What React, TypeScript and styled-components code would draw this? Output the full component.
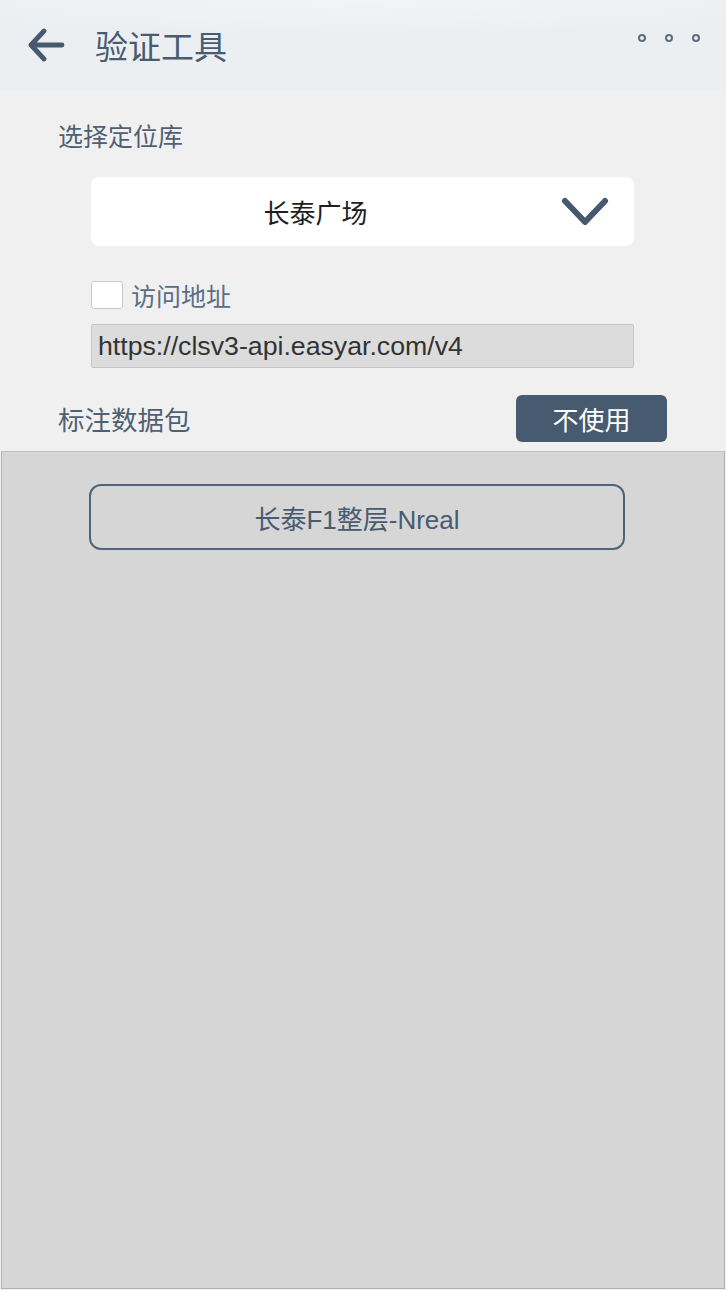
import React from 'react';
import styled, { createGlobalStyle } from 'styled-components';

const GlobalStyle = createGlobalStyle`
  html, body {
    margin: 0;
    padding: 0;
    background: #f0f0f0;
  }
  body {
    font-family: 'Liberation Sans', 'Noto Sans CJK SC', sans-serif;
  }
  * {
    box-sizing: border-box;
  }
`;

const Page = styled.div`
  width: 726px;
  height: 1290px;
  display: flex;
  flex-direction: column;
  background: #f0f0f0;
  overflow: hidden;
`;

const Header = styled.header`
  height: 90px;
  flex-shrink: 0;
  display: flex;
  align-items: center;
  padding: 0 26px 0 27px;
  background: radial-gradient(ellipse 70% 40% at 50% 0%, #f1f4f6 0%, #ebeff2 100%);
`;

const BackButton = styled.button`
  border: none;
  background: none;
  padding: 0;
  width: 38px;
  height: 34px;
  display: flex;
  align-items: center;
  justify-content: center;
`;

const Title = styled.h1`
  margin: 0 0 0 30px;
  font-family: 'Noto Sans CJK SC', sans-serif;
  font-weight: 400;
  font-size: 33px;
  line-height: 40px;
  color: #485b70;
  flex: 1;
`;

const MoreDots = styled.div`
  display: flex;
  gap: 19px;
  align-self: flex-start;
  margin-top: 34px;
`;

const Dot = styled.span`
  width: 8px;
  height: 8px;
  border-radius: 50%;
  border: 2px solid #5f6e7e;
`;

const Section = styled.section`
  display: flex;
  flex-direction: column;
  padding: 0 58px;
`;

const Label = styled.div<{ $size?: number }>`
  font-family: 'Noto Sans CJK SC', sans-serif;
  font-size: ${p => p.$size ?? 25}px;
  line-height: 30px;
  color: #4f6073;
`;

const Indented = styled.div`
  margin-left: 33px;
  width: 543px;
`;

const Select = styled(Indented)`
  margin-top: 27px;
  height: 69px;
  background: #ffffff;
  border-radius: 8px;
  display: grid;
  grid-template-columns: 1fr 94px;
  align-items: center;
`;

const SelectValue = styled.div`
  text-align: center;
  font-family: 'Noto Sans CJK SC', sans-serif;
  font-size: 26px;
  color: #1e1e1e;
`;

const Chevron = styled.div`
  display: flex;
  align-items: center;
  justify-content: flex-start;
  padding-left: 20px;
`;

const CheckRow = styled(Indented)`
  margin-top: 33px;
  height: 32px;
  display: flex;
  align-items: center;
  gap: 8px;
`;

const Checkbox = styled.span`
  width: 32px;
  height: 28px;
  background: #ffffff;
  border: 1px solid #c9c9c9;
  border-radius: 3px;
`;

const CheckLabel = styled.span`
  font-family: 'Noto Sans CJK SC', sans-serif;
  font-size: 25px;
  color: #5b6e84;
`;

const UrlField = styled(Indented)`
  margin-top: 13px;
  height: 44px;
  background: #dcdcdc;
  border: 1px solid #c6c6c6;
  border-radius: 2px;
  display: flex;
  align-items: center;
  padding-left: 6px;
  font-family: 'Liberation Sans', sans-serif;
  font-size: 26.7px;
  color: #333333;
  white-space: nowrap;
`;

const DataRow = styled.div`
  margin-top: 27px;
  display: flex;
  align-items: center;
  justify-content: space-between;
  padding-right: 1px;
`;

const DarkButton = styled.button`
  width: 151px;
  height: 47px;
  border: none;
  border-radius: 6px;
  background: #465a70;
  color: #ffffff;
  font-family: 'Noto Sans CJK SC', sans-serif;
  font-size: 26px;
  padding: 0;
`;

const Panel = styled.div`
  flex: 1;
  margin: 9px 1px 1px 1px;
  background: #d6d6d6;
  border: 1px solid #b0b0b0;
  border-top-color: #c0c0c0;
  padding: 32px 0 0 87px;
`;

const PackageItem = styled.button`
  width: 536px;
  height: 66px;
  border: 2px solid #506479;
  border-radius: 12px;
  background: transparent;
  color: #485b70;
  font-family: 'Liberation Sans', 'Noto Sans CJK SC', sans-serif;
  font-size: 26px;
  padding: 0;
  display: flex;
  align-items: center;
  justify-content: center;
`;

const ArrowLeft = () => (
  <svg width="38" height="34" viewBox="0 0 38 34">
    <path
      d="M35 17 H4 M17 3 L4 17 L17 31"
      fill="none"
      stroke="#46596e"
      strokeWidth="4.8"
      strokeLinecap="round"
      strokeLinejoin="round"
    />
  </svg>
);

const ChevronDown = () => (
  <svg width="50" height="32" viewBox="0 0 50 32">
    <path
      d="M5 5 L25 26 L45 5"
      fill="none"
      stroke="#46596e"
      strokeWidth="6"
      strokeLinecap="round"
      strokeLinejoin="round"
    />
  </svg>
);

const App: React.FC = () => (
  <>
    <GlobalStyle />
    <Page>
      <Header>
        <BackButton>
          <ArrowLeft />
        </BackButton>
        <Title>验证工具</Title>
        <MoreDots>
          <Dot />
          <Dot />
          <Dot />
        </MoreDots>
      </Header>
      <Section>
        <Label style={{ marginTop: 30 }}>选择定位库</Label>
        <Select>
          <SelectValue>长泰广场</SelectValue>
          <Chevron>
            <ChevronDown />
          </Chevron>
        </Select>
        <CheckRow>
          <Checkbox />
          <CheckLabel>访问地址</CheckLabel>
        </CheckRow>
        <UrlField>https://clsv3-api.easyar.com/v4</UrlField>
        <DataRow>
          <Label $size={26.5}>标注数据包</Label>
          <DarkButton>不使用</DarkButton>
        </DataRow>
      </Section>
      <Panel>
        <PackageItem>长泰F1整层-Nreal</PackageItem>
      </Panel>
    </Page>
  </>
);

export default App;
